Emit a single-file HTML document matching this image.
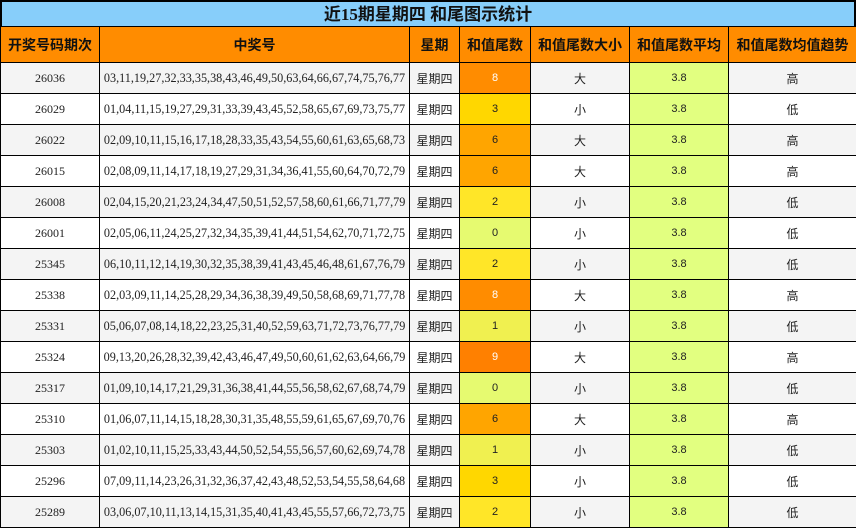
<!DOCTYPE html>
<html><head><meta charset="utf-8"><style>
*{margin:0;padding:0;box-sizing:border-box}
body{width:856px;height:527px;overflow:hidden;background:#fff;font-family:"Liberation Serif","Noto Serif CJK SC",serif}
.t{position:absolute;left:0;top:0;width:856px;height:27px;background:#87cefa;border:2px solid #000;border-bottom:none;text-align:center;font:bold 17px/25px "Liberation Serif","Noto Sans CJK SC",sans-serif;color:#111}
table{position:absolute;left:0;top:26px;border-collapse:collapse;table-layout:fixed;width:856px}
td,th{border:1.5px solid #000;text-align:center;font-size:12px;color:#222;overflow:hidden;white-space:nowrap}
th{background:#ff8c00;height:36px;font:bold 14px "Noto Sans CJK SC",sans-serif;color:#111}
td{height:31px;line-height:29px}
tr:nth-child(even) td{background:#f4f4f4}
td.n{font-size:12.2px;letter-spacing:0}
td.w{font-family:"Noto Sans CJK SC",sans-serif;font-size:12px}
tr td.a{background:#e2ff80;font-family:"Liberation Sans",sans-serif;font-size:11px}
td.v{font-family:"Liberation Sans",sans-serif;font-size:11px}
tr td.c8{background:#ff8c00;color:#fff}tr td.c9{background:#ff8000;color:#fff}
tr td.c6{background:#ffa500}tr td.c3{background:#ffd700}tr td.c2{background:#ffe628}
tr td.c1{background:#f0f050}tr td.c0{background:#e6fa70}
</style></head><body>
<div class="t">近15期星期四 和尾图示统计</div>
<table>
<colgroup><col style="width:99px"><col style="width:310px"><col style="width:50px"><col style="width:71px"><col style="width:99px"><col style="width:99px"><col style="width:128px"></colgroup>
<tr><th>开奖号码期次</th><th>中奖号</th><th>星期</th><th>和值尾数</th><th>和值尾数大小</th><th>和值尾数平均</th><th>和值尾数均值趋势</th></tr>
<tr><td>26036</td><td class="n">03,11,19,27,32,33,35,38,43,46,49,50,63,64,66,67,74,75,76,77</td><td class="w">星期四</td><td class="v c8">8</td><td class="w">大</td><td class="a">3.8</td><td class="w">高</td></tr>
<tr><td>26029</td><td class="n">01,04,11,15,19,27,29,31,33,39,43,45,52,58,65,67,69,73,75,77</td><td class="w">星期四</td><td class="v c3">3</td><td class="w">小</td><td class="a">3.8</td><td class="w">低</td></tr>
<tr><td>26022</td><td class="n">02,09,10,11,15,16,17,18,28,33,35,43,54,55,60,61,63,65,68,73</td><td class="w">星期四</td><td class="v c6">6</td><td class="w">大</td><td class="a">3.8</td><td class="w">高</td></tr>
<tr><td>26015</td><td class="n">02,08,09,11,14,17,18,19,27,29,31,34,36,41,55,60,64,70,72,79</td><td class="w">星期四</td><td class="v c6">6</td><td class="w">大</td><td class="a">3.8</td><td class="w">高</td></tr>
<tr><td>26008</td><td class="n">02,04,15,20,21,23,24,34,47,50,51,52,57,58,60,61,66,71,77,79</td><td class="w">星期四</td><td class="v c2">2</td><td class="w">小</td><td class="a">3.8</td><td class="w">低</td></tr>
<tr><td>26001</td><td class="n">02,05,06,11,24,25,27,32,34,35,39,41,44,51,54,62,70,71,72,75</td><td class="w">星期四</td><td class="v c0">0</td><td class="w">小</td><td class="a">3.8</td><td class="w">低</td></tr>
<tr><td>25345</td><td class="n">06,10,11,12,14,19,30,32,35,38,39,41,43,45,46,48,61,67,76,79</td><td class="w">星期四</td><td class="v c2">2</td><td class="w">小</td><td class="a">3.8</td><td class="w">低</td></tr>
<tr><td>25338</td><td class="n">02,03,09,11,14,25,28,29,34,36,38,39,49,50,58,68,69,71,77,78</td><td class="w">星期四</td><td class="v c8">8</td><td class="w">大</td><td class="a">3.8</td><td class="w">高</td></tr>
<tr><td>25331</td><td class="n">05,06,07,08,14,18,22,23,25,31,40,52,59,63,71,72,73,76,77,79</td><td class="w">星期四</td><td class="v c1">1</td><td class="w">小</td><td class="a">3.8</td><td class="w">低</td></tr>
<tr><td>25324</td><td class="n">09,13,20,26,28,32,39,42,43,46,47,49,50,60,61,62,63,64,66,79</td><td class="w">星期四</td><td class="v c9">9</td><td class="w">大</td><td class="a">3.8</td><td class="w">高</td></tr>
<tr><td>25317</td><td class="n">01,09,10,14,17,21,29,31,36,38,41,44,55,56,58,62,67,68,74,79</td><td class="w">星期四</td><td class="v c0">0</td><td class="w">小</td><td class="a">3.8</td><td class="w">低</td></tr>
<tr><td>25310</td><td class="n">01,06,07,11,14,15,18,28,30,31,35,48,55,59,61,65,67,69,70,76</td><td class="w">星期四</td><td class="v c6">6</td><td class="w">大</td><td class="a">3.8</td><td class="w">高</td></tr>
<tr><td>25303</td><td class="n">01,02,10,11,15,25,33,43,44,50,52,54,55,56,57,60,62,69,74,78</td><td class="w">星期四</td><td class="v c1">1</td><td class="w">小</td><td class="a">3.8</td><td class="w">低</td></tr>
<tr><td>25296</td><td class="n">07,09,11,14,23,26,31,32,36,37,42,43,48,52,53,54,55,58,64,68</td><td class="w">星期四</td><td class="v c3">3</td><td class="w">小</td><td class="a">3.8</td><td class="w">低</td></tr>
<tr><td>25289</td><td class="n">03,06,07,10,11,13,14,15,31,35,40,41,43,45,55,57,66,72,73,75</td><td class="w">星期四</td><td class="v c2">2</td><td class="w">小</td><td class="a">3.8</td><td class="w">低</td></tr>
</table>
</body></html>
